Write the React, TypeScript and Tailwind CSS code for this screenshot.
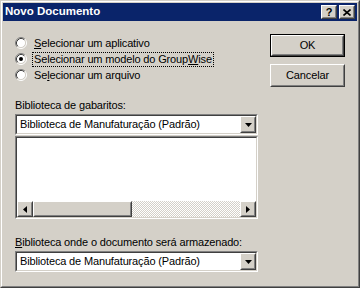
import React from "react";

const font = "font-['Liberation_Sans',Arial,sans-serif]";

function cn(...c: (string | false | undefined)[]) {
    return c.filter(Boolean).join(" ");
}

// classic raised 3d edge (button face)
function Raised({ className, children }: { className?: string; children?: React.ReactNode }) {
    return (
        <div className={cn("border border-t-white border-l-white border-r-[#404040] border-b-[#404040] bg-[#d4d0c8]", className)}>
            <div className="h-full w-full border border-t-[#d4d0c8] border-l-[#d4d0c8] border-r-[#808080] border-b-[#808080] flex items-center justify-center">
                {children}
            </div>
        </div>
    );
}

// sunken field edge
function Sunken({ className, children }: { className?: string; children?: React.ReactNode }) {
    return (
        <div className={cn("border border-t-[#808080] border-l-[#808080] border-r-white border-b-white", className)}>
            <div className="h-full w-full border border-t-[#404040] border-l-[#404040] border-r-[#d4d0c8] border-b-[#d4d0c8] bg-white flex flex-col">
                {children}
            </div>
        </div>
    );
}

function Radio({ checked }: { checked?: boolean }) {
    return (
        <svg width="12" height="12" viewBox="0 0 12 12" className="shrink-0">
            <circle cx="6" cy="6" r="4.5" fill="#fff" />
            <path d="M2.11 9.89 A5.5 5.5 0 0 1 9.89 2.11" fill="none" stroke="#808080" />
            <path d="M9.89 2.11 A5.5 5.5 0 0 1 2.11 9.89" fill="none" stroke="#fff" />
            <path d="M2.82 9.18 A4.5 4.5 0 0 1 9.18 2.82" fill="none" stroke="#404040" />
            <path d="M9.18 2.82 A4.5 4.5 0 0 1 2.82 9.18" fill="none" stroke="#d4d0c8" />
            {checked && <circle cx="6" cy="6" r="2" fill="#000" />}
        </svg>
    );
}

function Arrow({ dir }: { dir: "down" | "left" | "right" }) {
    if (dir === "down")
        return (
            <svg width="7" height="4" viewBox="0 0 7 4">
                <path d="M0 0h7L3.5 4z" fill="#000" />
            </svg>
        );
    return (
        <svg width="4" height="7" viewBox="0 0 4 7">
            <path d={dir === "left" ? "M4 0v7L0 3.5z" : "M0 0v7L4 3.5z"} fill="#000" />
        </svg>
    );
}

function Combo({ value }: { value: string }) {
    return (
        <Sunken className="h-[21px] w-[243px]">
            <div className="flex h-full items-center">
                <span className="flex-1 pl-[3px] text-black">{value}</span>
                <Raised className="h-full w-[16px]">
                    <Arrow dir="down" />
                </Raised>
            </div>
        </Sunken>
    );
}

export default function App() {
    return (
        <div className={cn("w-[360px] h-[288px] bg-[#d4d0c8] text-[11px] tracking-[-0.15px] text-black", font)}>
            <div className="h-full border border-t-[#d4d0c8] border-l-[#d4d0c8] border-r-[#404040] border-b-[#404040]">
                <div className="h-full border border-t-white border-l-white border-r-[#808080] border-b-[#808080] p-[1px] flex flex-col">
                    {/* title bar */}
                    <div className="h-[18px] bg-[#0a246a] flex items-center justify-between pl-[2px] pr-[2px]">
                        <span className="text-white font-bold text-[11.5px] tracking-normal">Novo Documento</span>
                        <div className="flex gap-[2px]">
                            <Raised className="w-[16px] h-[14px]">
                                <span className="font-bold text-[11px] leading-none tracking-normal">?</span>
                            </Raised>
                            <Raised className="w-[16px] h-[14px]">
                                <svg width="8" height="7" viewBox="0 0 8 7">
                                    <path d="M0.5 0.5l7 6M7.5 0.5l-7 6" stroke="#000" strokeWidth="1.6" />
                                </svg>
                            </Raised>
                        </div>
                    </div>

                    {/* body */}
                    <div className="flex pl-[12px] pt-[13px] gap-[12px]">
                        <div className="flex flex-col w-[243px] mt-[1px]">
                            <div className="h-[16px] flex items-center gap-[5px]">
                                <Radio />
                                <span className="px-[1px] border border-transparent">
                                    <u>S</u>elecionar um aplicativo
                                </span>
                            </div>
                            <div className="h-[16px] flex items-center gap-[5px]">
                                <Radio checked />
                                <span className="px-[1px] border border-dotted border-black leading-[13px]">
                                    Selecionar um modelo do Group<u>W</u>ise
                                </span>
                            </div>
                            <div className="h-[16px] flex items-center gap-[5px]">
                                <Radio />
                                <span className="px-[1px] border border-transparent">
                                    Se<u>l</u>ecionar um arquivo
                                </span>
                            </div>

                            <div className="h-[16px] mt-[14px] flex items-center">Biblioteca de gabaritos:</div>
                            <div className="mt-[1px]">
                                <Combo value="Biblioteca de Manufaturação (Padrão)" />
                            </div>
                            <Sunken className="mt-[1px] h-[83px] w-[243px]">
                                <div className="flex-1" />
                                <div className="h-[16px] flex">
                                    <Raised className="w-[16px] h-[16px]">
                                        <Arrow dir="left" />
                                    </Raised>
                                    <Raised className="w-[99px] h-[16px]" />
                                    <div className="flex-1 bg-[repeating-conic-gradient(#ffffff_0_25%,#d4d0c8_0_50%)] bg-[length:2px_2px]" />
                                    <Raised className="w-[16px] h-[16px]">
                                        <Arrow dir="right" />
                                    </Raised>
                                </div>
                            </Sunken>

                            <div className="h-[16px] mt-[15px] flex items-center">
                                <span>
                                    <u>B</u>iblioteca onde o documento será armazenado:
                                </span>
                            </div>
                            <div className="mt-[1px]">
                                <Combo value="Biblioteca de Manufaturação (Padrão)" />
                            </div>
                        </div>

                        <div className="flex flex-col gap-[7px]">
                            <div className="border border-black w-[75px] h-[23px]">
                                <Raised className="h-full w-full">OK</Raised>
                            </div>
                            <Raised className="w-[75px] h-[23px]">Cancelar</Raised>
                        </div>
                    </div>
                </div>
            </div>
        </div>
    );
}
